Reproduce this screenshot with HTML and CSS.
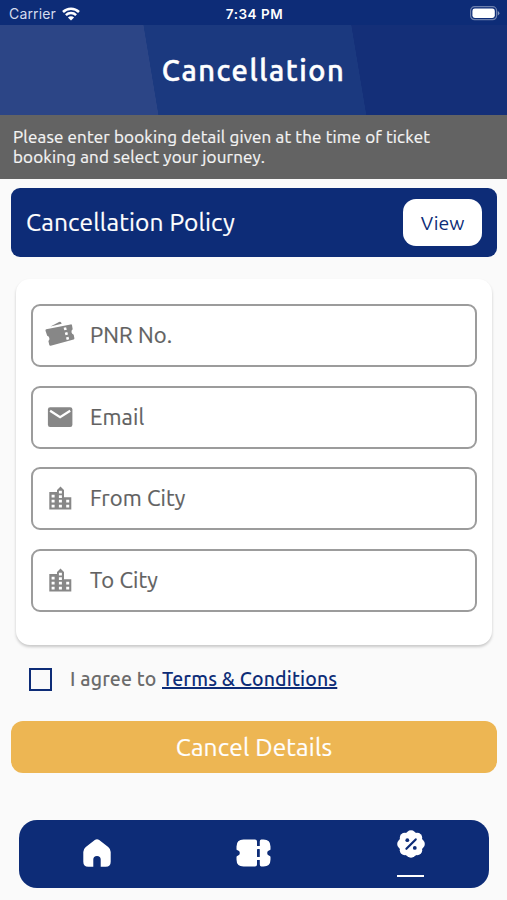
FILE: index.html
```
<!DOCTYPE html>
<html lang="en">
<head>
    <meta charset="UTF-8">
    <meta name="viewport" content="width=device-width, initial-scale=1.0">
    <title>Cancellation</title>
    <link rel="stylesheet" href="styles.css">
</head>
<body>
    <div class="status-bar">
        <div class="carrier">
            <span>Carrier</span>
            <svg width="18" height="14" viewBox="0 0 18 14">
                <path d="M1 5a11.400 11.400 0 0 1 16 0M3.900 8.100a7.300 7.300 0 0 1 10.200 0" fill="none" stroke="#fff" stroke-width="2.500"/>
                <path d="M9 13.600 5.900 10.600a4.400 4.400 0 0 1 6.200 0z" fill="#fff"/>
            </svg>
        </div>
        <div class="time">7:34 PM</div>
        <div class="battery">
            <svg width="31" height="15" viewBox="0 0 31 15">
                <rect x="1.600" y="0.700" width="26" height="13" rx="4" fill="none" stroke="#fff" stroke-opacity="0.4" stroke-width="1.200"/>
                <rect x="3.400" y="2.500" width="22.400" height="9.400" rx="2.400" fill="#fff"/>
                <path d="M28.800 5v4.600q1.600-.8 1.600-2.300T28.800 5z" fill="#fff" fill-opacity="0.5"/>
            </svg>
        </div>
    </div>

    <header class="header">
        <h1>Cancellation</h1>
    </header>

    <p class="notice">Please enter booking detail given at the time of ticket<br>booking and select your journey.</p>

    <main>
        <section class="policy">
            <h2>Cancellation Policy</h2>
            <button class="view">View</button>
        </section>

        <form class="card">
            <label class="field">
                <svg width="30" height="30" viewBox="0 0 30 30">
                    <path d="M5.500 6.500 14 1.900q1.400-.7 2 .4l.7 1.500z" fill="#878787"/>
                    <path d="M1.200 9.200 25.600 4.400q1.200-.2 1.400.8l.7 4a3.200 3.200 0 0 0 1 5.600l.7 3.400q.1 1-.8 1.300L5.700 25.700q-1.100.2-1.400-.8l-.9-3.800a3.200 3.200 0 0 0-1.200-5.400L.5 10.800q-.2-1.200.7-1.600z" fill="#878787"/>
                    <path d="M18.600 7.800l2.500-.6.700 2.500-2.500.6zM19.800 12.700l2.500-.6.700 2.500-2.500.6zM21 17.400l2.500-.6.700 2.500-2.500.6z" fill="#fff"/>
                </svg>
                <span>PNR No.</span>
            </label>
            <label class="field">
                <svg width="30" height="30" viewBox="-0.4 0 30 30">
                    <rect x="2.500" y="5.300" width="24.500" height="19.600" rx="2.200" fill="#878787"/>
                    <path d="M4.700 8.800 14.700 15.200 24.800 8.800" fill="none" stroke="#fff" stroke-width="2.300"/>
                </svg>
                <span>Email</span>
            </label>
            <label class="field">
                <svg width="30" height="30" viewBox="-1 -1.500 30 30">
                    <path d="M18 12.700V5.600L14.500 2 11 5.600v2H3.300v17.300h22V12.700z" fill="#878787"/>
                    <path d="M5.600 10.200h3v2.800h-3zM5.600 15.300h3v2.800h-3zM5.600 20.300h3v2.800h-3zM12.900 6.300h3v2.600h-3zM12.900 10.800h3v2.600h-3zM12.900 15.300h3v2.800h-3zM12.900 20.300h3v2.800h-3zM20.200 15.300h3v2.800h-3zM20.200 20.300h3v2.800h-3z" fill="#fff"/>
                </svg>
                <span>From City</span>
            </label>
            <label class="field">
                <svg width="30" height="30" viewBox="-1 -1.500 30 30">
                    <path d="M18 12.700V5.600L14.500 2 11 5.600v2H3.300v17.300h22V12.700z" fill="#878787"/>
                    <path d="M5.600 10.200h3v2.800h-3zM5.600 15.300h3v2.800h-3zM5.600 20.300h3v2.800h-3zM12.900 6.300h3v2.600h-3zM12.900 10.800h3v2.600h-3zM12.900 15.300h3v2.800h-3zM12.900 20.300h3v2.800h-3zM20.200 15.300h3v2.800h-3zM20.200 20.300h3v2.800h-3z" fill="#fff"/>
                </svg>
                <span>To City</span>
            </label>
        </form>

        <div class="agree">
            <span class="checkbox"></span>
            <span class="agree-text">I agree to</span>
            <a class="terms">Terms &amp; Conditions</a>
        </div>

        <button class="submit">Cancel Details</button>
    </main>

    <nav class="tabs">
        <div class="tab">
            <svg width="28" height="28" viewBox="0 0 28 28">
                <path d="M11.800 1q2.200-1.600 4.400 0l9 6.900q2.500 2 2.500 5v9.800q0 5-5 5h-5V20.600a3.700 3.700 0 0 0-7.400 0v7.100H5.300q-5 0-5-5V12.900q0-3 2.500-5z" fill="#fff"/>
            </svg>
        </div>
        <div class="tab">
            <svg width="35" height="28" viewBox="0 0 35 28">
                <path d="M7.500.5H19q2 0 2 2v4.500h2.800V2.500q0-2 1.500-2h2.200q7 0 7 7v2.700q0 1-1.200 1a2.900 2.900 0 0 0 0 5.600q1.200.2 1.200 1.200v2.500q0 7-7 7h-2.200q-1.500 0-1.500-2V21H21v4.500q0 2-2 2H7.500q-7 0-7-7V18q0-1 1.200-1.200a2.900 2.900 0 0 0 0-5.600q-1.200 0-1.200-1V7.500q0-7 7-7z" fill="#fff"/>
                <rect x="21" y="10" width="2.800" height="8" rx="0.600" fill="#0d2c77"/>
            </svg>
        </div>
        <div class="tab active">
            <svg width="28" height="28" viewBox="0 0 28 28">
                <g fill="#fff">
                    <circle cx="14" cy="14" r="12.300"/>
                    <circle cx="14" cy="5.200" r="5"/>
                    <circle cx="20.200" cy="7.800" r="5"/>
                    <circle cx="22.800" cy="14" r="5"/>
                    <circle cx="20.200" cy="20.200" r="5"/>
                    <circle cx="14" cy="22.800" r="5"/>
                    <circle cx="7.800" cy="20.200" r="5"/>
                    <circle cx="5.200" cy="14" r="5"/>
                    <circle cx="7.800" cy="7.800" r="5"/>
                </g>
                <path d="M9.400 18.800 18.700 9.400" stroke="#0d2c77" stroke-width="2.200" stroke-linecap="round"/>
                <circle cx="10.300" cy="10.200" r="1.900" fill="#0d2c77"/>
                <circle cx="17.800" cy="17.900" r="1.900" fill="#0d2c77"/>
            </svg>
            <span class="underline"></span>
        </div>
    </nav>
</body>
</html>
```
FILE: styles.css
```
* {
    box-sizing: border-box;
}
body {
    margin: 0;
    height: 900px;
    overflow: hidden;
    background-color: #fafafa;
    font-family: Ubuntu, "Noto Sans", sans-serif;
}
h1, h2, p {
    margin: 0;
    font-weight: 400;
}
svg {
    display: block;
    flex: none;
}
button {
    border: none;
    font-family: inherit;
    cursor: pointer;
}
.status-bar {
    display: grid;
    grid-template-columns: 1fr auto 1fr;
    align-items: center;
    height: 25px;
    padding: 2px 7px 0 9px;
    background-color: #0d2c77;
    color: white;
    font-family: Inter, sans-serif;
    font-size: 13.5px;
}
.carrier {
    display: flex;
    align-items: center;
    gap: 6px;
    color: #d5dcee;
    font-size: 14px;
    letter-spacing: 0.15px;
}
.time {
    font-weight: 600;
    letter-spacing: 0.5px;
}
.battery {
    justify-self: end;
}
.header {
    height: 90px;
    background: linear-gradient(80.54deg, #2c4586 156px, #1b397f 156.5px, #1b397f 361px, #142f78 361.5px);
    color: white;
    text-align: center;
}
.header h1 {
    font-size: 29px;
    font-weight: 500;
    line-height: 91px;
    letter-spacing: 1.55px;
    -webkit-text-stroke: 0.5px white;
}
.notice {
    height: 64px;
    padding: 12px 13px 0;
    background-color: #636363;
    color: #f5f5f5;
    font-size: 17px;
    line-height: 19.5px;
    letter-spacing: 0.16px;
    white-space: nowrap;
    -webkit-text-stroke: 0.2px #f5f5f5;
}
main {
    padding: 9px 10px 0 11px;
}
.policy {
    display: flex;
    align-items: center;
    justify-content: space-between;
    height: 69px;
    padding: 0 15px 0 15px;
    border-radius: 9px;
    background-color: #0d2c77;
    color: white;
}
.policy h2 {
    padding-bottom: 1px;
    font-size: 24.5px;
    letter-spacing: 0.15px;
    -webkit-text-stroke: 0.2px white;
}
.view {
    width: 79px;
    height: 47px;
    padding: 0;
    border-radius: 13px;
    background-color: white;
    color: #0d2c77;
    font-size: 19.5px;
}
.card {
    display: flex;
    flex-direction: column;
    gap: 18.5px;
    height: 366px;
    margin: 22px 5px 0 5px;
    padding: 25px 15px 0;
    border-radius: 14px;
    background-color: white;
    box-shadow: 0 2px 3px rgba(0, 0, 0, 0.2);
}
.field {
    display: flex;
    align-items: center;
    gap: 15px;
    height: 63px;
    padding: 0 0 1px 12px;
    border: 2px solid #9c9c9c;
    border-radius: 9px;
    color: #616161;
    font-size: 22px;
    letter-spacing: 0.1px;
}
.field span {
    padding-bottom: 1px;
    -webkit-text-stroke: 0.2px #616161;
}
.agree {
    display: flex;
    align-items: center;
    height: 30px;
    margin: 19px 0 0 18px;
    font-size: 19.5px;
    font-weight: 500;
    letter-spacing: 0.15px;
    white-space: nowrap;
}
.checkbox {
    width: 23px;
    height: 23px;
    margin-right: 18px;
    border: 2.5px solid #0d2c77;
}
.agree-text {
    width: 92px;
    color: #6b6b6b;
}
.terms {
    color: #0d2c77;
    text-decoration: underline;
    text-decoration-thickness: 2px;
    text-decoration-skip-ink: none;
}
.submit {
    display: block;
    width: 100%;
    height: 52px;
    margin-top: 27px;
    border-radius: 12px;
    background-color: #edb653;
    color: white;
    font-size: 24.5px;
    letter-spacing: 0.15px;
    -webkit-text-stroke: 0.2px white;
}
.tabs {
    display: grid;
    grid-template-columns: repeat(3, 1fr);
    height: 68px;
    margin: 47px 18px 0 19px;
    border-radius: 18px;
    background-color: #0d2c77;
}
.tab {
    display: flex;
    flex-direction: column;
    align-items: center;
    padding-top: 19px;
}
.active {
    padding-top: 10px;
}
.underline {
    width: 27px;
    height: 2px;
    margin-top: 17px;
    background-color: white;
}
```
